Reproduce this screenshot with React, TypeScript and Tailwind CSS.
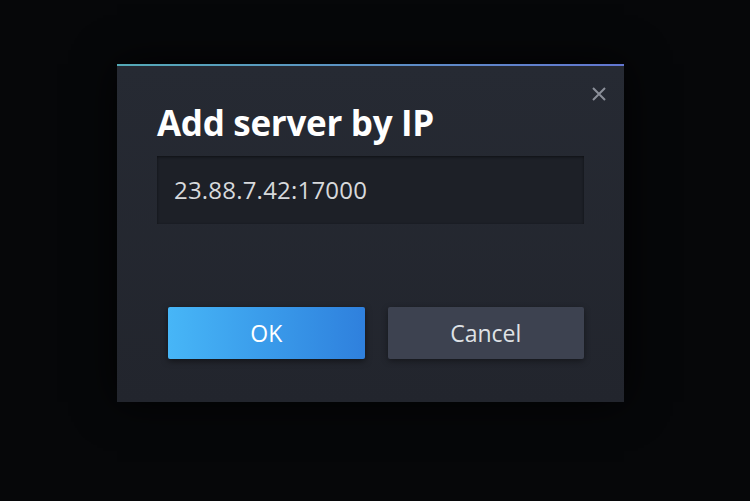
import React from 'react';

const App: React.FC = () => {
  return (
    <div className="w-[750px] h-[501px] bg-[#060709] overflow-hidden pl-[117px] pt-[64px] font-['Open_Sans',sans-serif]">
      <div className="relative w-[507px] h-[338px] bg-gradient-to-b from-[#262a33] to-[#22252d] border-t-2 border-t-[#5ea8c8] shadow-[0_0_40px_rgba(0,0,0,0.8)]">
        <div className="absolute -top-[2px] left-0 right-0 h-[2px] bg-gradient-to-r from-[#54a9b6] to-[#6276d0]"></div>
        <button className="absolute top-[19px] right-[16px] w-[18px] h-[18px] flex items-center justify-center text-[#8b8f99]">
          <svg width="16" height="16" viewBox="0 0 16 16" fill="none" stroke="currentColor" strokeWidth="2">
            <path d="M2 2L14 14M14 2L2 14" />
          </svg>
        </button>
        <div className="pl-[40px] pr-[40px] pt-[36px]">
          <h1 className="text-[35px] leading-[42px] font-bold text-white tracking-[-0.3px]">Add server by IP</h1>
          <div className="mt-[12px] h-[68px] bg-[#1d2027] shadow-[inset_0_1px_3px_rgba(0,0,0,0.5)] flex items-center pl-[17px]">
            <span className="text-[24px] text-[#d7d9dc] tracking-[0.2px]">23.88.7.42:17000</span>
          </div>
          <div className="mt-[83px] flex gap-[23px] pl-[11px]">
            <button className="w-[197px] h-[52px] rounded-[2px] bg-gradient-to-r from-[#47b6f7] to-[#2f80dd] text-[23px] text-white shadow-[0_2px_6px_rgba(0,0,0,0.5)]">OK</button>
            <button className="w-[197px] h-[52px] rounded-[2px] bg-[#3d4250] text-[23px] text-[#dfe1e5] shadow-[0_2px_6px_rgba(0,0,0,0.4)]">Cancel</button>
          </div>
        </div>
      </div>
    </div>
  );
};

export default App;
